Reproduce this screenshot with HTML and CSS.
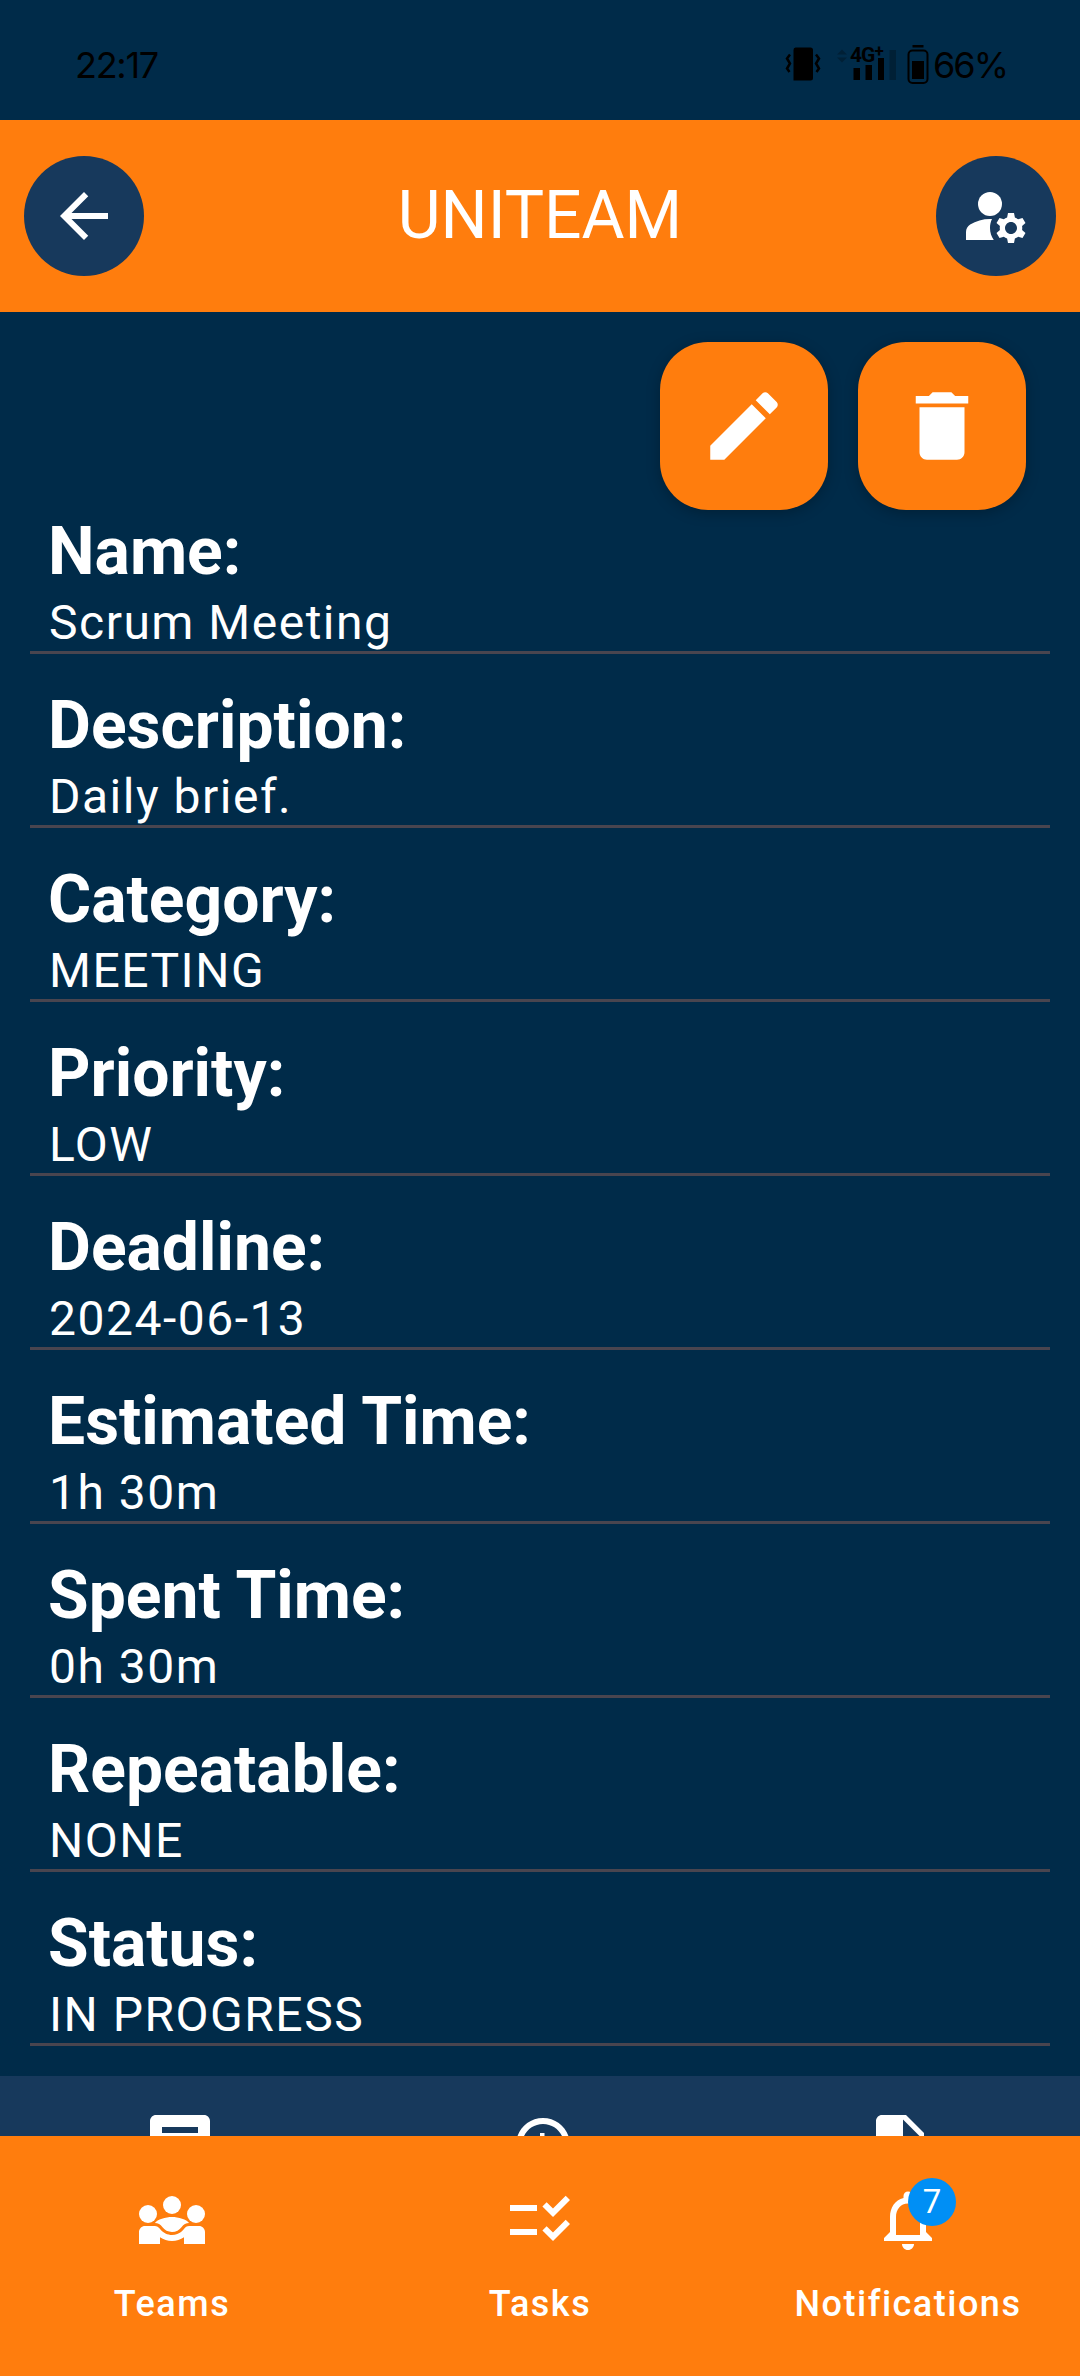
FILE: index.html
```html
<!DOCTYPE html>
<html lang="en">
<head>
<meta charset="utf-8">
<title>Uniteam</title>
<link rel="stylesheet" href="styles.css">
</head>
<body>
<div class="screen">
  <div class="status">
    <span class="clock">22:17</span>
    <div class="indicators">
      <svg class="vibrate" width="36" height="34" viewBox="0 0 36 34"><path d="M10.500 .5h15a2.500 2.500 0 0 1 2.500 2.500v28a2.500 2.500 0 0 1-2.500 2.500H8.500V3a2.500 2.500 0 0 1 2-2.500z"/><path d="M5 7.500 2 11.500l3 5-3 5 2.500 3.500M31 7.500l3 4-3 5 3 5-2.500 3.500" fill="none" stroke="#000" stroke-width="2.500"/></svg>
      <div class="network">
        <svg width="60" height="34" viewBox="0 0 60 34"><path opacity=".25" d="M0 6.500l5-5 5 5zM0 9.500l5 5 5-5z"/><path d="M16.500 20h6.500v12h-6.500zM28.500 17h6.500v15h-6.500zM41 10h6v22h-6z"/><path opacity=".25" d="M52.500 2h6.500v30h-6.500z"/></svg>
        <span class="network-type">4G<sup>+</sup></span>
      </div>
      <svg class="battery" width="22" height="40" viewBox="0 0 22 40"><path d="M5.500 0h11v2.500h-11zM5 16h12v18H5z"/><rect x="1.500" y="5.500" width="19" height="32.500" rx="4" fill="none" stroke="#000" stroke-width="2"/></svg>
      <span class="percent">66%</span>
    </div>
  </div>

  <header class="topbar">
    <button class="round"><svg class="icon" viewBox="0 0 24 24"><path d="M20 11H7.830l5.590-5.590L12 4l-8 8 8 8 1.410-1.410L7.830 13H20z"/></svg></button>
    <h1>UNITEAM</h1>
    <button class="round"><svg class="icon" viewBox="0 0 24 24"><circle cx="10" cy="8" r="4"/><path d="M10.670 13.020C10.450 13.010 10.230 13 10 13c-2.420 0-4.680.67-6.610 1.820C2.510 15.340 2 16.320 2 17.350V20h9.260C10.470 18.870 10 17.490 10 16c0-1.070.25-2.070.67-2.980z"/><path d="M20.750 16c0-.22-.03-.42-.06-.63l1.140-1.010-1-1.730-1.450.49c-.32-.27-.68-.48-1.080-.63L18 11h-2l-.3 1.490c-.4.15-.76.36-1.080.63l-1.450-.49-1 1.730 1.140 1.010c-.03.21-.06.41-.06.63s.03.42.06.63l-1.140 1.010 1 1.730 1.450-.49c.32.27.68.48 1.080.63L16 21h2l.3-1.490c.4-.15.76-.36 1.080-.63l1.450.49 1-1.730-1.140-1.010c.03-.21.06-.41.06-.63zM17 18c-1.100 0-2-.9-2-2s.9-2 2-2 2 .9 2 2-.9 2-2 2z"/></svg></button>
  </header>

  <main class="content">
    <div class="actions">
      <button class="action"><svg class="icon" viewBox="0 0 24 24"><path d="M3 17.250V21h3.750L17.810 9.940l-3.750-3.750L3 17.250zM20.710 7.040c.39-.39.39-1.020 0-1.410l-2.340-2.340c-.39-.39-1.020-.39-1.410 0l-1.830 1.830 3.750 3.750 1.830-1.830z"/></svg></button>
      <button class="action"><svg class="icon" viewBox="0 0 24 24"><path d="M6 19c0 1.100.9 2 2 2h8c1.100 0 2-.9 2-2V7H6v12zM19 4h-3.500l-1-1h-5l-1 1H5v2h14V4z"/></svg></button>
    </div>
    <dl class="details">
      <div class="field"><dt>Name:</dt><dd>Scrum Meeting</dd></div>
      <div class="field"><dt>Description:</dt><dd>Daily brief.</dd></div>
      <div class="field"><dt>Category:</dt><dd>MEETING</dd></div>
      <div class="field"><dt>Priority:</dt><dd>LOW</dd></div>
      <div class="field"><dt>Deadline:</dt><dd>2024-06-13</dd></div>
      <div class="field"><dt>Estimated Time:</dt><dd>1h 30m</dd></div>
      <div class="field"><dt>Spent Time:</dt><dd>0h 30m</dd></div>
      <div class="field"><dt>Repeatable:</dt><dd>NONE</dd></div>
      <div class="field"><dt>Status:</dt><dd>IN PROGRESS</dd></div>
    </dl>
    <div class="tabs">
      <svg class="icon" viewBox="0 0 24 24"><path d="M20 2H4c-1.100 0-2 .9-2 2v12c0 1.100.9 2 2 2h14l4 4V4c0-1.100-.9-2-2-2zm-2 12H6v-2h12v2zm0-3H6V9h12v2zm0-3H6V6h12v2z"/></svg>
      <svg class="icon history" viewBox="0 0 24 24"><path d="M13 3c-4.970 0-9 4.030-9 9H1l3.890 3.890.07.14L9 12H6c0-3.870 3.130-7 7-7s7 3.130 7 7-3.130 7-7 7c-1.930 0-3.680-.79-4.940-2.060l-1.420 1.420C8.270 19.990 10.510 21 13 21c4.970 0 9-4.030 9-9s-4.030-9-9-9zm-1 5v5l4.280 2.540.72-1.210-3.500-2.080V8H12z"/></svg>
      <svg class="icon" viewBox="0 0 24 24"><path d="M14 2H6c-1.100 0-2 .9-2 2v16c0 1.100.9 2 2 2h12c1.100 0 2-.9 2-2V8l-6-6zm-1 7V3.500L18.500 9H13z"/></svg>
    </div>
  </main>

  <nav class="bottombar">
    <a class="item">
      <svg class="icon" viewBox="0 0 24 24"><circle cx="4" cy="10" r="3"/><circle cx="12" cy="7" r="3"/><circle cx="20" cy="10" r="3"/><path d="M6.320 13.010c.96.02 1.850.5 2.450 1.340C9.500 15.380 10.710 16 12 16s2.500-.62 3.230-1.660c.6-.84 1.490-1.320 2.450-1.340C16.960 11.780 14.080 11 12 11s-4.960.78-5.680 2.010z"/><path d="M21 14h-3.270c-.77 0-1.350.45-1.680.92C16.010 14.980 14.690 17 12 17c-1.430 0-3.030-.64-4.050-2.080C7.560 14.370 6.950 14 6.270 14H3c-1.100 0-2 .9-2 2v4h7v-2.260c1.150.8 2.540 1.260 4 1.260s2.850-.46 4-1.260V20h7v-4c0-1.100-.9-2-2-2z"/></svg>
      <span>Teams</span>
    </a>
    <a class="item">
      <svg class="icon" viewBox="0 0 24 24"><path d="M11 7H2v2h9V7zm0 8H2v2h9v-2zm5.340-4l-3.540-3.540 1.410-1.410 2.120 2.120 4.240-4.240L22 5.340 16.340 11zm0 8l-3.540-3.540 1.410-1.410 2.120 2.120 4.240-4.240L22 13.340 16.340 19z"/></svg>
      <span>Tasks</span>
    </a>
    <a class="item">
      <span class="bell">
        <svg class="icon" viewBox="0 0 24 24"><path d="M12 22c1.100 0 2-.9 2-2h-4c0 1.100.9 2 2 2zm6-6v-5c0-3.070-1.630-5.640-4.500-6.320V4c0-.83-.67-1.500-1.500-1.500s-1.500.67-1.500 1.500v.68C7.640 5.360 6 7.920 6 11v5l-2 2v1h16v-1l-2-2zm-2 1H8v-6c0-2.480 1.510-4.500 4-4.500s4 2.020 4 4.500v6z"/></svg>
        <b class="badge">7</b>
      </span>
      <span>Notifications</span>
    </a>
  </nav>
</div>
</body>
</html>
```
FILE: styles.css
```css
* { box-sizing: border-box; }

body {
  margin: 0;
  background: #002b49;
  color: #fff;
  font-family: Roboto, sans-serif;
}

.screen {
  display: flex;
  flex-direction: column;
  width: 1080px;
  height: 2376px;
  overflow: hidden;
}

.icon {
  display: block;
  width: 72px;
  height: 72px;
  fill: currentColor;
}

button {
  display: grid;
  place-items: center;
  padding: 0;
  border: 0;
  color: inherit;
}

.status {
  display: flex;
  flex: 0 0 120px;
  justify-content: space-between;
  padding: 43px 0 0 75px;
  color: #000;
  font: 36px/44px Inter, sans-serif;
  letter-spacing: -1.3px;
}

.indicators { display: flex; }

.vibrate { margin: 4px 16px 0 0; }

.network {
  position: relative;
  margin: 4px 10px 0 0;
}

.network-type {
  position: absolute;
  left: 13px;
  top: -2px;
  font: 700 21px/20px Roboto, sans-serif;
  letter-spacing: -1px;
}

.network-type sup {
  font-size: 17px;
  line-height: 0;
  vertical-align: 5px;
}

.battery { margin: 2px 4px 0 0; }

.percent {
  width: 147px;
  letter-spacing: -2px;
}

.topbar {
  display: flex;
  flex: 0 0 192px;
  align-items: center;
  justify-content: space-between;
  padding: 0 24px;
  background: #ff7d0d;
}

.topbar h1 {
  margin: 0;
  font-size: 66px;
  font-weight: 400;
  line-height: 84px;
}

.round {
  width: 120px;
  height: 120px;
  border-radius: 50%;
  background: #17395c;
}

.content {
  flex: 0 0 1824px;
  overflow: hidden;
}

.actions {
  display: flex;
  justify-content: flex-end;
  gap: 30px;
  padding: 30px 54px 0;
}

.action {
  width: 168px;
  height: 168px;
  border-radius: 48px;
  background: #ff7d0d;
  box-shadow: 0 3px 14px rgba(0, 0, 0, .25);
}

.action .icon {
  width: 90px;
  height: 90px;
}

.details {
  display: grid;
  gap: 30px;
  margin: 0 30px 30px;
}

.field {
  padding-left: 18px;
  border-bottom: 3px solid #49454f;
}

dt {
  font-size: 66px;
  font-weight: 700;
  line-height: 83px;
}

dd {
  margin: 0;
  padding: 2px 0 0 1px;
  font-size: 48px;
  line-height: 56px;
  letter-spacing: 1.5px;
}

.tabs {
  display: grid;
  grid-template-columns: repeat(3, 1fr);
  justify-items: center;
  padding: 33px 0;
  background: #17395c;
}

.bottombar {
  display: grid;
  flex: 0 0 240px;
  grid-template-columns: repeat(3, 344px);
  gap: 24px;
  padding-top: 48px;
  background: #ff7d0d;
}

.item {
  display: flex;
  flex-direction: column;
  align-items: center;
  gap: 24px;
  font-size: 36px;
  font-weight: 500;
  line-height: 48px;
  letter-spacing: 1.5px;
}

.bell { position: relative; }

.badge {
  position: absolute;
  left: 36px;
  top: -6px;
  width: 48px;
  height: 48px;
  border-radius: 50%;
  background: #008ff5;
  font-size: 33px;
  font-weight: 400;
  letter-spacing: 0;
  line-height: 48px;
  text-align: center;
}
```
